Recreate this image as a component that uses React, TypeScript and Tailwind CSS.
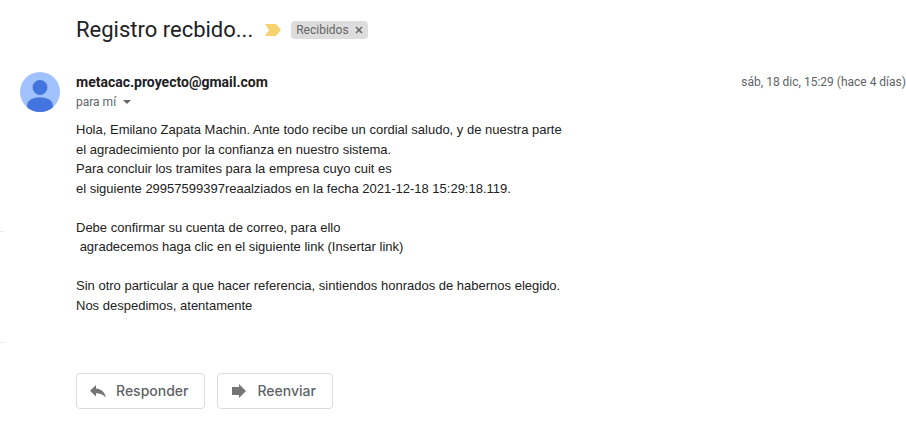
import React from "react";

const lines: string[] = [
  "Hola, Emilano Zapata Machin. Ante todo recibe un cordial saludo, y de nuestra parte",
  "el agradecimiento por la confianza en nuestro sistema.",
  "Para concluir los tramites para la empresa cuyo cuit es",
  "el siguiente 29957599397reaalziados en la fecha 2021-12-18 15:29:18.119.",
  "",
  "Debe confirmar su cuenta de correo, para ello",
  " agradecemos haga clic en el siguiente link (Insertar link)",
  "",
  "Sin otro particular a que hacer referencia, sintiendos honrados de habernos elegido.",
  "Nos despedimos, atentamente",
];

function Avatar() {
  return (
    <svg viewBox="0 0 40 40" className="size-10 shrink-0" role="img" aria-label="Perfil">
      <defs>
        <clipPath id="avatar-clip">
          <circle cx="20" cy="20" r="20" />
        </clipPath>
      </defs>
      <g clipPath="url(#avatar-clip)">
        <rect width="40" height="40" fill="#a0c3ff" />
        <circle cx="20" cy="15.5" r="7.4" fill="#4374e0" />
        <path d="M7.2 40V33C7.2 28 13.5 25.2 20 25.2S32.8 28 32.8 33V40Z" fill="#4374e0" />
      </g>
    </svg>
  );
}

function ActionButton({ label, children }: { label: string; children: React.ReactNode }) {
  return (
    <button
      type="button"
      className="flex h-9 items-center gap-2 rounded border border-[#dadce0] bg-white pr-4 pl-[11px] font-[Inter,sans-serif] text-sm font-medium text-[#5f6368]"
    >
      {children}
      {label}
    </button>
  );
}

export default function App() {
  return (
    <div className="flex bg-white font-[Roboto,sans-serif] text-[#202124]">
      <div className="w-1 shrink-0 pt-[231px]" aria-hidden="true">
        <div className="h-28 border-y border-[#ececec]" />
      </div>
      <main className="min-w-0 flex-1 pt-4 pl-4">
        <header className="flex items-center pl-14">
          <h1 className="text-[22px] leading-7">Registro recbido...</h1>
          <svg viewBox="0 0 16 12" className="ml-3 h-3 w-4" aria-label="Importante" role="img">
            <path d="M0 0H11L16 6L11 12H0L4 6Z" fill="#f7d36f" />
          </svg>
          <span className="ml-[10px] flex h-[18px] items-center gap-1.5 rounded bg-[#ddd] px-[5px] text-xs text-[#666]">
            Recibidos
            <button type="button" aria-label="Quitar etiqueta">
              <svg viewBox="0 0 8 8" className="size-2">
                <path d="M1 1L7 7M7 1L1 7" stroke="#666" strokeWidth="1.5" />
              </svg>
            </button>
          </span>
        </header>

        <section className="mt-7 flex gap-4">
          <Avatar />
          <div className="min-w-0 flex-1">
            <div className="flex items-center justify-between">
              <h2 className="text-sm leading-5 font-bold">metacac.proyecto@gmail.com</h2>
              <time dateTime="2021-12-18T15:29" className="text-xs leading-5 text-[#5f6368]">
                sáb, 18 dic, 15:29 (hace 4 días)
              </time>
            </div>
            <button type="button" className="flex items-center gap-1.5 text-xs leading-5 text-[#5f6368]">
              para mí
              <svg viewBox="0 0 10 4" className="h-1 w-[10px]">
                <path d="M1 0H9L5 4Z" fill="#666" />
              </svg>
            </button>

            <div className="mt-2 font-['Liberation_Sans',Arial,sans-serif] text-[13px] leading-normal whitespace-pre-wrap text-[#222]">
              {lines.join("\n")}
            </div>

            <div className="mt-[58px] flex gap-3">
              <ActionButton label="Responder">
                <svg viewBox="0 0 20 20" className="size-5">
                  <path d="M2 9.8L8 4V7.4C13.5 8 17 11 17.8 16.4C15 13.2 12 12.2 8 12.2V15.6Z" fill="#757575" />
                </svg>
              </ActionButton>
              <ActionButton label="Reenviar">
                <svg viewBox="0 0 20 20" className="size-5">
                  <path d="M3 6H10V3L17 10L10 17V14H3Z" fill="#757575" />
                </svg>
              </ActionButton>
            </div>
          </div>
        </section>
      </main>
    </div>
  );
}
